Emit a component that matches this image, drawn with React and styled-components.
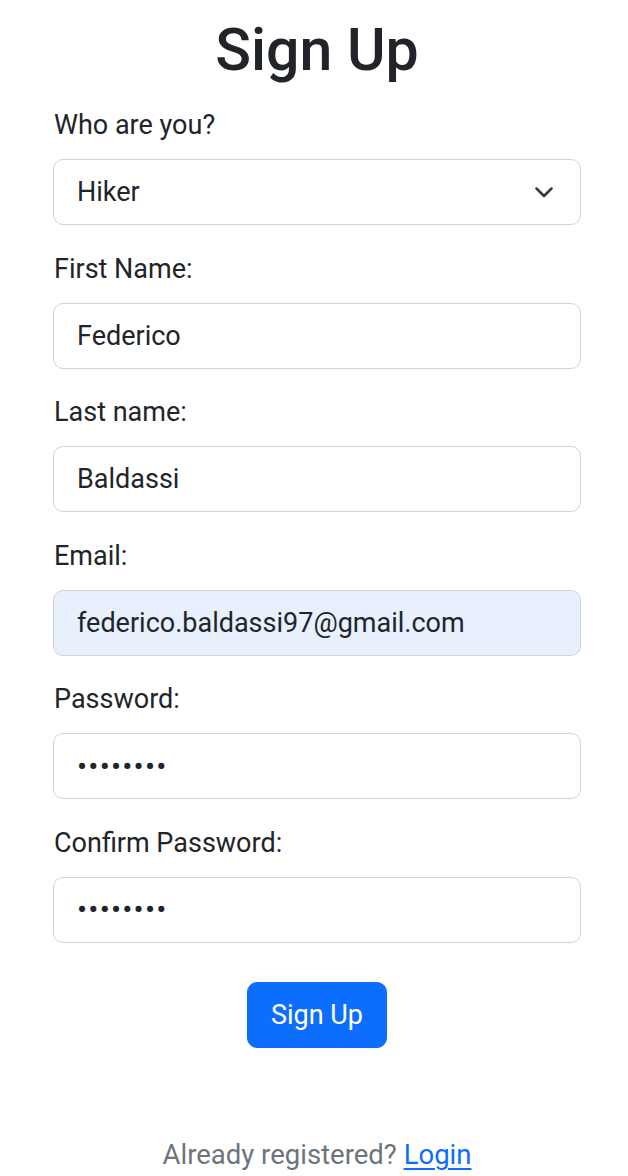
import React from "react";
import styled, { createGlobalStyle } from "styled-components";

const GlobalStyle = createGlobalStyle`
	html, body {
		margin: 0;
		padding: 0;
		background: #ffffff;
	}
	body {
		font-family: Roboto, "Liberation Sans", sans-serif;
		color: #212529;
	}
`;

const Page = styled.div`
	width: 628px;
	height: 1176px;
	box-sizing: border-box;
	padding: 0 47px 0 53px;
	display: flex;
	flex-direction: column;
`;

const Title = styled.h1`
	margin: 8px 0 0;
	font-size: 59px;
	font-weight: 500;
	line-height: 84px;
	text-align: center;
	color: #212529;
`;

const Form = styled.form`
	display: flex;
	flex-direction: column;
	margin-top: 11px;
`;

const Group = styled.div`
	display: flex;
	flex-direction: column;
	gap: 13px;
	margin-bottom: 21.6px;
`;

const Label = styled.label`
	font-size: 27px;
	line-height: 42px;
	height: 42px;
	margin-top: 1px;
	padding-left: 1px;
`;

const Field = styled.input`
	box-sizing: border-box;
	width: 100%;
	height: 66px;
	padding: 0 23px;
	font-family: inherit;
	font-size: ${props => (props.type === "password" ? "30px" : "27px")};
	color: #212529;
	background: ${props => (props.autofilled ? "#e8f0fe" : "#ffffff")};
	border: 1px solid #ced4da;
	border-radius: 10px;
	outline: none;
	letter-spacing: ${props => (props.type === "password" ? "1.2px" : "normal")};
`;

const SelectBox = styled.div`
	position: relative;
	box-sizing: border-box;
	height: 66px;
	border: 1px solid #ced4da;
	border-radius: 10px;
	display: flex;
	align-items: center;
	justify-content: space-between;
	padding: 0 27px 0 23px;
	font-size: 27px;
`;

const Chevron = () => (
	<svg width="18" height="12" viewBox="0 0 18 12" fill="none">
		<path
			d="M1.5 2.5l7.5 7.5 7.5-7.5"
			stroke="#343a40"
			strokeWidth="2.5"
			strokeLinecap="round"
			strokeLinejoin="round"
		/>
	</svg>
);

const ButtonRow = styled.div`
	display: flex;
	justify-content: center;
	margin-top: 17px;
`;

const SubmitButton = styled.button`
	height: 66px;
	padding: 0 23px;
	font-family: inherit;
	font-size: 27px;
	color: #ffffff;
	background: #0d6efd;
	border: 1px solid #0d6efd;
	border-radius: 10px;
	cursor: pointer;
`;

const Footer = styled.p`
	margin: auto 0 0;
	height: 42px;
	line-height: 42px;
	text-align: center;
	font-size: 27.5px;
	color: #6c757d;
`;

const LoginLink = styled.a`
	color: #0d6efd;
	text-decoration: underline;
	text-underline-offset: 4px;
`;

const fields = [
	{ label: "First Name:", value: "Federico", type: "text" },
	{ label: "Last name:", value: "Baldassi", type: "text" },
	{ label: "Email:", value: "federico.baldassi97@gmail.com", type: "email", autofilled: true },
	{ label: "Password:", value: "federico", type: "password" },
	{ label: "Confirm Password:", value: "federico", type: "password" },
];

export default function App() {
	return (
		<>
			<GlobalStyle />
			<Page>
				<Title>Sign Up</Title>
				<Form onSubmit={e => e.preventDefault()}>
					<Group>
						<Label>Who are you?</Label>
						<SelectBox>
							<span>Hiker</span>
							<Chevron />
						</SelectBox>
					</Group>
					{fields.map(f => (
						<Group key={f.label}>
							<Label>{f.label}</Label>
							<Field
								type={f.type}
								defaultValue={f.value}
								autofilled={f.autofilled}
								readOnly
							/>
						</Group>
					))}
					<ButtonRow>
						<SubmitButton type="submit">Sign Up</SubmitButton>
					</ButtonRow>
				</Form>
				<Footer>
					Already registered? <LoginLink href="#">Login</LoginLink>
				</Footer>
			</Page>
		</>
	);
}
